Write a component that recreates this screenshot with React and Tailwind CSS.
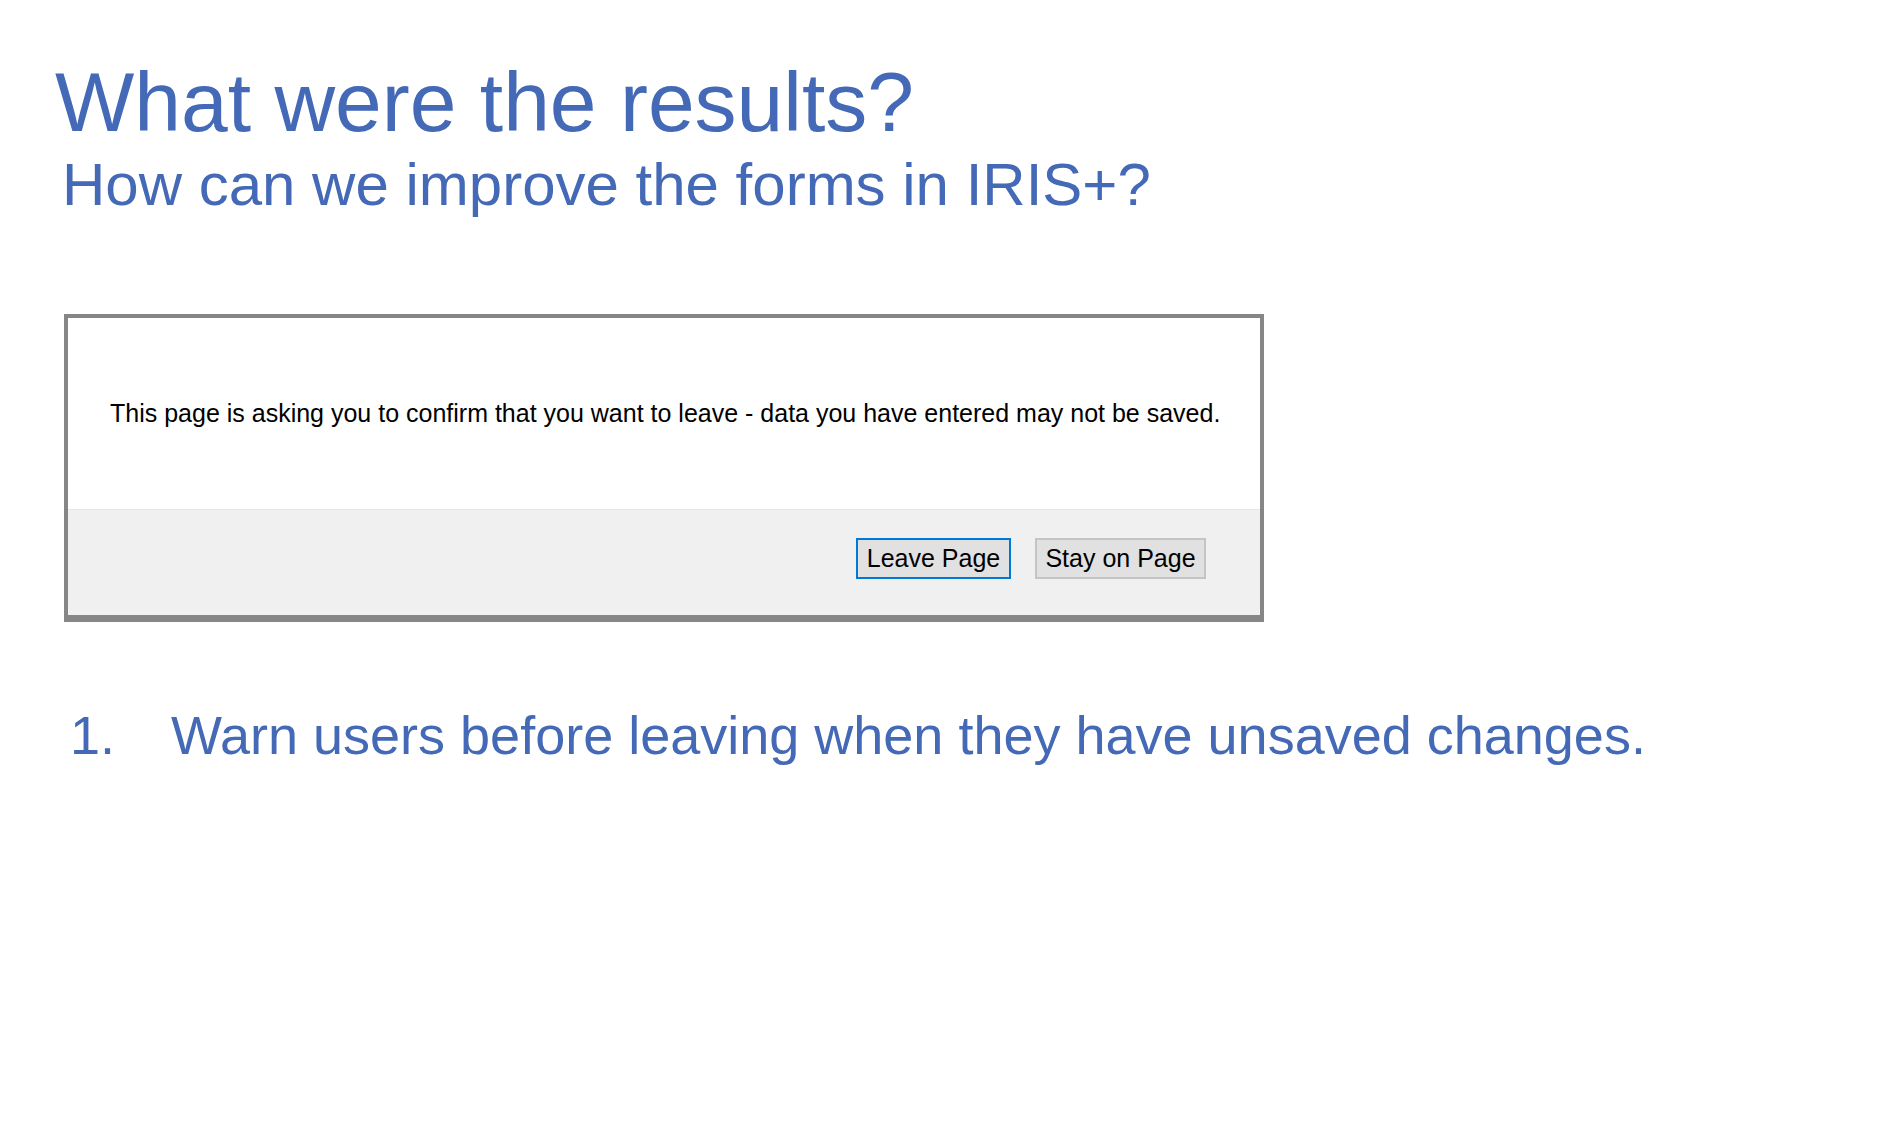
import React from "react";

const BLUE = "text-[#4469b6]";

function LeaveDialog() {
  return (
    <div className="ml-[9px] mt-[99px] w-[1200px] border-x-[4px] border-t-[4px] border-b-[7px] border-[#868686] bg-white">
      {/* message */}
      <div className="h-[191px] flex items-center pl-[42px]">
        <p className="text-[25px] leading-none text-black whitespace-nowrap">
          This page is asking you to confirm that you want to leave - data you have entered may not be saved.
        </p>
      </div>

      {/* buttons */}
      <div className="h-[106px] border-t border-[#e6e6e6] bg-[#f0f0f0] flex justify-end gap-[24px] pt-[28px] pr-[54px]">
        <button className="w-[155px] h-[41px] flex items-center justify-center border-2 border-[#0078d7] bg-[#e1e1e1] text-[25px] leading-none text-black">
          Leave Page
        </button>
        <button className="w-[171px] h-[41px] flex items-center justify-center border-2 border-[#c4c4c4] bg-[#e1e1e1] text-[25px] leading-none text-black">
          Stay on Page
        </button>
      </div>
    </div>
  );
}

export default function App() {
  return (
    <div className="w-full h-[1138px] bg-white pl-[55px] pt-[60px] font-['Liberation_Sans',Arial,sans-serif]">
      <h1 className={`text-[84px] leading-none ${BLUE} whitespace-nowrap`}>What were the results?</h1>
      <h2 className={`ml-[7px] mt-[11px] text-[60px] leading-none ${BLUE} whitespace-nowrap`}>
        How can we improve the forms in IRIS+?
      </h2>

      <LeaveDialog />

      <ol className={`ml-[15px] mt-[86px] text-[54px] leading-none ${BLUE}`}>
        <li className="flex whitespace-nowrap">
          <span className="w-[101px] shrink-0">1.</span>
          <span>Warn users before leaving when they have unsaved changes.</span>
        </li>
      </ol>
    </div>
  );
}
